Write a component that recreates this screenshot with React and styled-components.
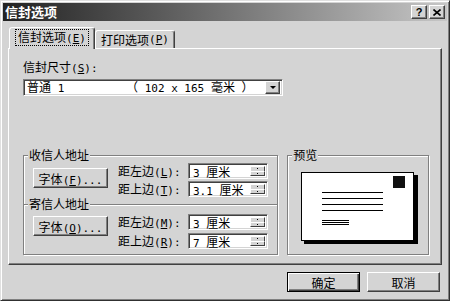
import React from 'react'
import styled, { createGlobalStyle, css } from 'styled-components'

const face = '#d4d4d4'

const GlobalStyle = createGlobalStyle`
  html, body {
    margin: 0;
    padding: 0;
    background: ${face};
  }
  body {
    font-family: "Noto Sans CJK SC", "Liberation Sans", sans-serif;
    font-size: 12px;
    color: #000;
  }
  * {
    box-sizing: border-box;
  }
`

const raised = css`
  border: 1px solid;
  border-color: #fff #404040 #404040 #fff;
  box-shadow: inset -1px -1px #808080;
`

const sunken = css`
  border: 1px solid;
  border-color: #808080 #fff #fff #808080;
  box-shadow: inset 1px 1px #404040, inset -1px -1px ${face};
`

const Window = styled.div`
  width: 450px;
  height: 301px;
  background: ${face};
  border: 1px solid;
  border-color: #e0e0e0 #303030 #303030 #e0e0e0;
  box-shadow: inset 1px 1px #fff, inset -1px -1px #808080;
  padding: 2px;
  display: flex;
  flex-direction: column;
`

const TitleBar = styled.div`
  height: 18px;
  flex-shrink: 0;
  display: flex;
  align-items: center;
  justify-content: space-between;
  padding: 0 2px 0 2px;
  background: linear-gradient(to right, #222 0%, #5a5a5a 35%, #c6c6c6 100%);
`

const Title = styled.span`
  color: #fff;
  font-weight: bold;
  font-size: 13px;
  line-height: 16px;
`

const TitleButtons = styled.div`
  display: flex;
  gap: 2px;
`

const TitleButton = styled.div`
  ${raised};
  width: 16px;
  height: 14px;
  background: ${face};
  display: flex;
  align-items: center;
  justify-content: center;
  font: bold 11px "Liberation Sans", sans-serif;
  line-height: 12px;
`

const Body = styled.div`
  flex: 1;
  display: flex;
  flex-direction: column;
  padding: 6px 5px 0;
`

const TabRow = styled.div`
  display: flex;
  align-items: flex-end;
  height: 21px;
  padding-left: 1px;
  position: relative;
  z-index: 1;
`

const Tab = styled.div`
  width: ${p => p.$w}px;
  height: ${p => (p.$active ? 22 : 18)}px;
  margin-bottom: ${p => (p.$active ? -1 : 0)}px;
  background: ${face};
  border: 1px solid;
  border-bottom: none;
  border-color: #fff #404040 transparent #fff;
  border-radius: 3px 3px 0 0;
  box-shadow: inset -1px 0 #808080;
  display: flex;
  align-items: center;
  justify-content: center;
  padding-bottom: ${p => (p.$active ? 2 : 0)}px;
  white-space: nowrap;
`

const Focus = styled.span`
  border: 1px dotted #000;
  padding: 0 2px;
  line-height: 13px;
`

const Panel = styled.div`
  ${raised};
  height: 217px;
  padding: 11px 12px 9px 14px;
  display: flex;
  flex-direction: column;
`

const Label = styled.div`
  line-height: ${p => p.$lh || 14}px;
  white-space: nowrap;
`

// half-width latin text, close to the bitmap font's fixed cells
const Mono = styled.span`
  font-family: "DejaVu Sans Mono", "Liberation Mono", monospace;
  font-size: 11px;
  white-space: pre;
`

const Combo = styled.div`
  ${sunken};
  margin-top: 3px;
  width: 260px;
  height: 17px;
  background: #fff;
  display: flex;
  align-items: center;
  padding: 2px;
`

const ComboText = styled.span`
  width: ${p => p.$w}px;
  line-height: 13px;
  white-space: pre;
  padding-left: ${p => p.$pad || 0}px;
`

const ComboArrow = styled.div`
  ${raised};
  margin-left: auto;
  width: 15px;
  height: 13px;
  background: ${face};
  display: flex;
  align-items: center;
  justify-content: center;
  &::after {
    content: '';
    border-left: 3px solid transparent;
    border-right: 3px solid transparent;
    border-top: 3px solid #000;
  }
`

const GroupsRow = styled.div`
  margin-top: auto;
  display: flex;
  gap: 9px;
`

const Group = styled.div`
  width: ${p => p.$w}px;
  height: 100px;
  border: 1px solid #808080;
  box-shadow: 1px 1px 0 #fff, inset 1px 1px 0 #fff;
  display: flex;
  flex-direction: column;
`

const Section = styled.div`
  display: flex;
  flex-direction: column;
  ${p => p.$divided && css`
    border-top: 1px solid #808080;
    box-shadow: inset 0 1px 0 #fff;
  `}
`

const GroupTitle = styled.div`
  align-self: flex-start;
  margin: -8px 0 0 4px;
  padding: 0 1px;
  height: 14px;
  line-height: 14px;
  background: ${face};
  white-space: nowrap;
`

const FieldGrid = styled.div`
  display: grid;
  grid-template-columns: 85px 70px 80px;
  grid-template-rows: 16px 16px;
  row-gap: ${p => p.$gap}px;
  padding-left: 9px;
  margin-top: ${p => p.$top}px;
  margin-bottom: ${p => p.$bottom || 0}px;
`

const Button = styled.button`
  ${raised};
  width: ${p => p.$w}px;
  height: 20px;
  padding: 0;
  background: ${face};
  font: 12px "Noto Sans CJK SC", "Liberation Sans", sans-serif;
  color: #000;
  white-space: nowrap;
  ${p => p.$default && css`
    border: 1px solid #000;
    box-shadow: inset 1px 1px #fff, inset -1px -1px #404040, inset -2px -2px #808080;
  `}
`

const FontButton = styled(Button)`
  grid-row: 1 / 3;
  align-self: start;
  margin-top: ${p => p.$offset}px;
`

const SpinBox = styled.div`
  ${sunken};
  height: 16px;
  background: #fff;
  display: flex;
  padding: 2px;
`

const SpinText = styled.span`
  flex: 1;
  padding-left: 2px;
  line-height: 12px;
  white-space: pre;
`

const SpinButtons = styled.div`
  width: 15px;
  display: flex;
  flex-direction: column;
`

const SpinButton = styled.div`
  flex: 1;
  background: ${face};
  border-top: 1px solid #fff;
  border-left: 1px solid #fff;
  border-right: 1px solid #404040;
  ${p => !p.$up && 'border-bottom: 1px solid #404040;'}
  display: flex;
  align-items: center;
  justify-content: center;
  &::after {
    content: '';
    width: 1px;
    height: 1px;
    background: #000;
  }
`

const PreviewArea = styled.div`
  padding: 10px 0 0 13px;
`

const ButtonRow = styled.div`
  margin-top: 7px;
  display: flex;
  justify-content: flex-end;
  gap: 7px;
  padding-right: 2px;
`

const Mn = ({ k }) => (
  <Mono>(<u>{k}</u>)</Mono>
)

const Spin = ({ num, unit }) => (
  <SpinBox>
    <SpinText><Mono>{num} </Mono>{unit}</SpinText>
    <SpinButtons>
      <SpinButton $up />
      <SpinButton />
    </SpinButtons>
  </SpinBox>
)

const Field = ({ label, k, num }) => (
  <>
    <Label $lh={16}>{label}<Mn k={k} /><Mono>:</Mono></Label>
    <Spin num={num} unit="厘米" />
  </>
)

const Envelope = () => (
  <svg width="118" height="73" viewBox="0 0 118 73">
    <rect x="3" y="3" width="114" height="69" fill="#000" />
    <rect x="0.5" y="0.5" width="112" height="68" fill="#fff" stroke="#000" />
    <rect x="92" y="4" width="12" height="12" fill="#111" />
    {[20.5, 26.5, 32.5, 38.5].map(y => (
      <line key={y} x1="21" x2="82" y1={y} y2={y} stroke="#000" />
    ))}
    {[48.5, 50.5, 52.5].map(y => (
      <line key={y} x1="21" x2="48" y1={y} y2={y} stroke="#000" />
    ))}
  </svg>
)

export default function App() {
  return (
    <>
      <GlobalStyle />
      <Window>
        <TitleBar>
          <Title>信封选项</Title>
          <TitleButtons>
            <TitleButton>?</TitleButton>
            <TitleButton>
              <svg width="8" height="7" viewBox="0 0 8 7">
                <path d="M0.5 0.5 L7.5 6.5 M7.5 0.5 L0.5 6.5" stroke="#000" strokeWidth="1.6" />
              </svg>
            </TitleButton>
          </TitleButtons>
        </TitleBar>
        <Body>
          <TabRow>
            <Tab $active $w={86}>
              <Focus>信封选项<Mn k="E" /></Focus>
            </Tab>
            <Tab $w={80}>打印选项<Mn k="P" /></Tab>
          </TabRow>
          <Panel>
            <Label>信封尺寸<Mn k="S" /><Mono>:</Mono></Label>
            <Combo>
              <ComboText $w={100} $pad={1}>普通<Mono> 1</Mono></ComboText>
              <ComboText>（<Mono> 102 x 165 </Mono>毫米<Mono> </Mono>）</ComboText>
              <ComboArrow />
            </Combo>
            <GroupsRow>
              <Group $w={256}>
                <Section>
                  <GroupTitle>收信人地址</GroupTitle>
                  <FieldGrid $gap={2} $top={1} $bottom={7}>
                    <FontButton $w={75} $offset={5}>字体<Mn k="F" /><Mono>...</Mono></FontButton>
                    <Field label="距左边" k="L" num="3" />
                    <Field label="距上边" k="T" num="3.1" />
                  </FieldGrid>
                </Section>
                <Section $divided>
                  <GroupTitle>寄信人地址</GroupTitle>
                  <FieldGrid $gap={3} $top={3}>
                    <FontButton $w={75} $offset={2}>字体<Mn k="O" /><Mono>...</Mono></FontButton>
                    <Field label="距左边" k="M" num="3" />
                    <Field label="距上边" k="R" num="7" />
                  </FieldGrid>
                </Section>
              </Group>
              <Group $w={142}>
                <GroupTitle>预览</GroupTitle>
                <PreviewArea>
                  <Envelope />
                </PreviewArea>
              </Group>
            </GroupsRow>
          </Panel>
          <ButtonRow>
            <Button $default $w={73}>确定</Button>
            <Button $w={73}>取消</Button>
          </ButtonRow>
        </Body>
      </Window>
    </>
  )
}
